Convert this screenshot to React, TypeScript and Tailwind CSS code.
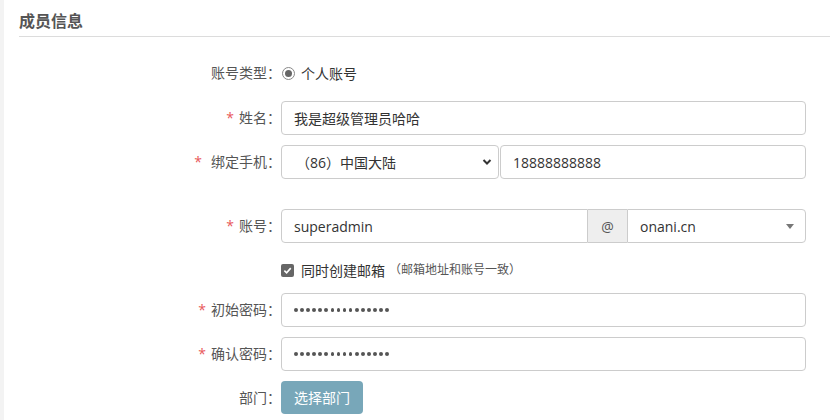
import React from "react";

const font = { fontFamily: "'Open Sans', 'Noto Sans CJK SC', sans-serif" };

function Label({ req, text, gap = "mr-[5px]" }: { req?: boolean; text: string; gap?: string }) {
  return (
    <div className="w-[277px] shrink-0 text-right text-[14px] text-[#555] leading-[20px]">
      {req && <span className={`text-[#e8585a] ${gap}`}>*</span>}
      {text}：
    </div>
  );
}

const inputCls =
  "h-[34px] border border-[#ccc] rounded-[4px] bg-white flex items-center px-[12px] text-[14px] text-[#333]";

function Dots() {
  return (
    <div className="flex items-center gap-[2.5px]">
      {Array.from({ length: 16 }).map((_, i) => (
        <span key={i} className="w-[3.6px] h-[3.6px] rounded-full bg-[#555]" />
      ))}
    </div>
  );
}

export default function App() {
  return (
    <div className="w-[830px] h-[420px] flex bg-white overflow-hidden" style={font}>
      <div className="w-[4px] bg-[#f3f3f3] shrink-0" />
      <div className="flex-1 flex flex-col">
        <div className="ml-[15px] h-[37px] pt-[10px] border-b border-[#dcdcdc]">
          <div className="text-[16px] font-bold text-[#555] leading-[22px]">成员信息</div>
        </div>

        {/* 账号类型 */}
        <div className="mt-[19px] h-[34px] flex items-center">
          <Label text="账号类型" />
          <div className="flex items-center">
            <span className="w-[13px] h-[13px] rounded-full border border-[#888] flex items-center justify-center ml-[1px]">
              <span className="w-[7px] h-[7px] rounded-full bg-[#666]" />
            </span>
            <span className="ml-[6px] text-[14px] text-[#333]">个人账号</span>
          </div>
        </div>

        {/* 姓名 */}
        <div className="mt-[11px] h-[34px] flex items-center">
          <Label req text="姓名" />
          <div className={`${inputCls} w-[525px]`}>我是超级管理员哈哈</div>
        </div>

        {/* 绑定手机 */}
        <div className="mt-[10px] h-[34px] flex items-center">
          <Label req text="绑定手机" gap="mr-[9px]" />
          <div className="flex w-[525px]">
            <div className={`${inputCls} w-[218px] justify-between pr-[6px]`}>
              <span className="ml-[2px]">（86）中国大陆</span>
              <svg width="10" height="8" viewBox="0 0 10 8">
                <path d="M1.5 2 L5 5.5 L8.5 2" fill="none" stroke="#333" strokeWidth="2" />
              </svg>
            </div>
            <div className={`${inputCls} flex-1 ml-[1px]`}>18888888888</div>
          </div>
        </div>

        {/* 账号 */}
        <div className="mt-[30px] h-[34px] flex items-center">
          <Label req text="账号" />
          <div className="flex w-[525px] h-[34px]">
            <div className="h-[34px] w-[307px] border border-[#ccc] rounded-l-[4px] flex items-center px-[12px] text-[14px] text-[#333]">
              superadmin
            </div>
            <div className="h-[34px] w-[39px] border-y border-[#ccc] bg-[#eee] flex items-center justify-center text-[14px] text-[#555]">
              @
            </div>
            <div className="h-[34px] flex-1 border border-[#ccc] rounded-r-[4px] flex items-center justify-between pl-[12px] pr-[11px] text-[14px] text-[#333]">
              <span>onani.cn</span>
              <svg width="8" height="5" viewBox="0 0 8 5">
                <path d="M0 0 L8 0 L4 5 Z" fill="#777" />
              </svg>
            </div>
          </div>
        </div>

        {/* checkbox */}
        <div className="mt-[10px] h-[34px] flex items-center">
          <div className="w-[277px] shrink-0" />
          <span className="w-[13px] h-[13px] rounded-[2px] bg-[#666] flex items-center justify-center">
            <svg width="9" height="9" viewBox="0 0 10 10">
              <path d="M1.5 5.2 L4 7.6 L8.6 2.4" fill="none" stroke="#fff" strokeWidth="1.8" />
            </svg>
          </span>
          <span className="ml-[7px] text-[14px] text-[#333]">同时创建邮箱</span>
          <span className="ml-[4px] text-[12px] text-[#555]">（邮箱地址和账号一致）</span>
        </div>

        {/* 初始密码 */}
        <div className="mt-[6px] h-[34px] flex items-center">
          <Label req text="初始密码" />
          <div className={`${inputCls} w-[525px]`}>
            <Dots />
          </div>
        </div>

        {/* 确认密码 */}
        <div className="mt-[10px] h-[34px] flex items-center">
          <Label req text="确认密码" />
          <div className={`${inputCls} w-[525px]`}>
            <Dots />
          </div>
        </div>

        {/* 部门 */}
        <div className="mt-[10px] h-[34px] flex items-start">
          <div className="h-[33px] flex items-center">
            <Label text="部门" />
          </div>
          <div className="h-[33px] w-[82px] rounded-[4px] bg-[#78a7b9] text-white text-[14px] flex items-center justify-center">
            选择部门
          </div>
        </div>
      </div>
    </div>
  );
}
